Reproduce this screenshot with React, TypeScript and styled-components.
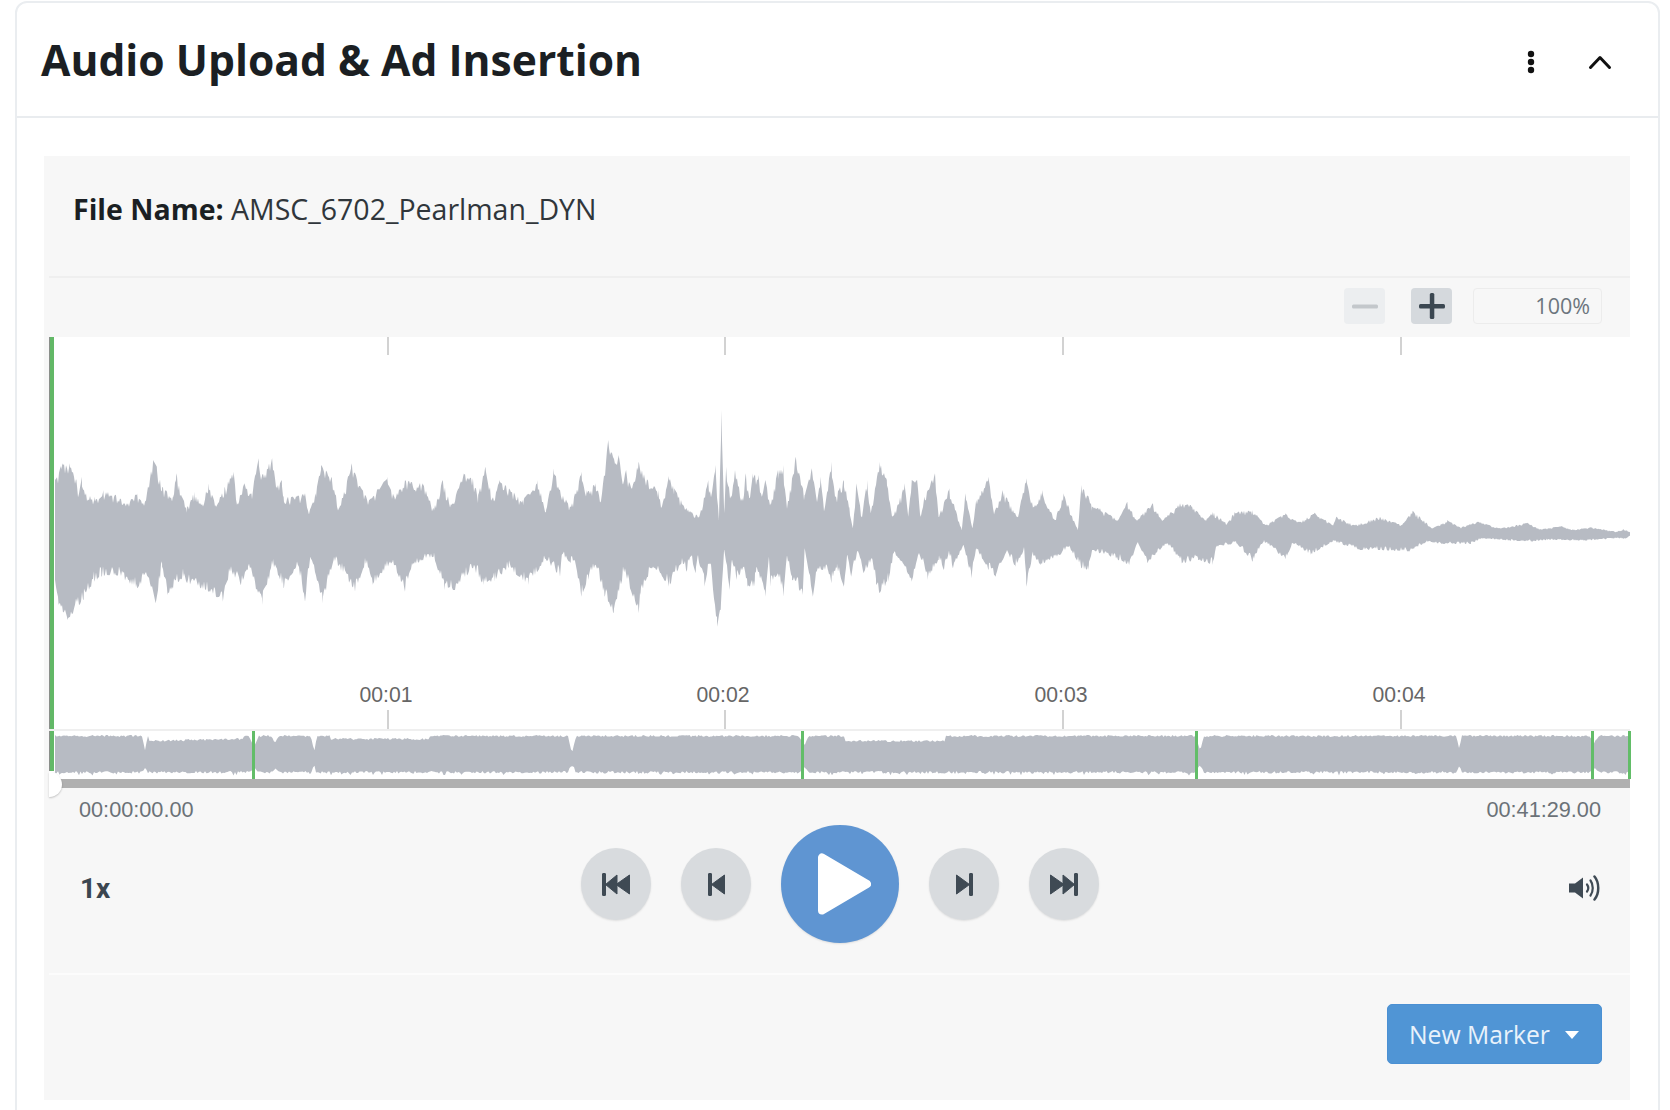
import React, { useMemo } from "react";
import styled, { createGlobalStyle } from "styled-components";

const GlobalStyle = createGlobalStyle`
  html, body { margin: 0; padding: 0; background: #fff; }
  body { font-family: "Open Sans", "Noto Sans", sans-serif; }
  * { box-sizing: border-box; }
`;

const Page = styled.div`
  width: 1670px;
  height: 1110px;
  overflow: hidden;
  padding: 1px 10px 0 15px;
`;
const Card = styled.section`
  width: 1645px;
  min-height: 1130px;
  border: 2px solid #eaedf0;
  border-radius: 12px 12px 0 0;
  background: #fff;
`;
const CardHeader = styled.header`
  height: 115px;
  border-bottom: 2px solid #e9ecef;
  display: flex;
  align-items: center;
  justify-content: space-between;
  padding: 0 46px 0 24px;
`;
const Title = styled.h1`
  margin: 0;
  font-size: 42.6px;
  font-weight: 700;
  color: #1b1f23;
  line-height: 1.2;
`;
const HeaderActions = styled.div`
  display: flex;
  align-items: center;
  gap: 53px;
  padding-top: 4px;
`;
const Panel = styled.div`
  margin: 38px 0 0 27px;
  width: 1586px;
  background: #f7f7f7;
`;
const FileRow = styled.div`
  height: 120px;
  padding: 34px 0 0 29px;
  font-size: 28.5px;
  line-height: 38px;
  color: #30363b;
  strong { font-weight: 700; color: #1b1f23; }
`;
const Rule = styled.div<{ $color: string }>`
  height: 2px;
  margin-left: 5px;
  background: ${(p) => p.$color};
`;
const ZoomBar = styled.div`
  height: 59px;
  display: flex;
  align-items: center;
  justify-content: flex-end;
  padding: 0 28px 3px 0;
`;
const ZoomButton = styled.button<{ $off?: boolean }>`
  width: 41px;
  height: 36px;
  padding: 0;
  border: 0;
  border-radius: 4px;
  display: flex;
  align-items: center;
  justify-content: center;
  background: ${(p) => (p.$off ? "#eceef0" : "#d5d9dd")};
  margin-right: ${(p) => (p.$off ? "26px" : "21px")};
`;
const ZoomValue = styled.div`
  width: 129px;
  height: 36px;
  border: 1px solid #ececec;
  border-radius: 4px;
  padding-right: 11px;
  text-align: right;
  font-size: 21.5px;
  line-height: 34px;
  color: #6c757d;
`;
const Timeline = styled.div`
  position: relative;
  margin-left: 5px;
  background: #fff;
`;
const TickRow = styled.div<{ $h: number }>`
  position: relative;
  height: ${(p) => p.$h}px;
`;
const Tick = styled.i`
  position: absolute;
  top: 0;
  bottom: 0;
  width: 2px;
  background: #d2d2d2;
`;
const WaveSvg = styled.svg`
  display: block;
  width: 1581px;
  filter: blur(0.5px);
`;
const LabelRow = styled.div`
  position: relative;
  height: 30px;
`;
const TimeLabel = styled.span`
  position: absolute;
  top: 0;
  transform: translateX(-50%);
  font-family: "Liberation Sans", Arial, sans-serif;
  font-size: 21.2px;
  line-height: 30px;
  color: #666;
`;
const Overview = styled.div`
  position: relative;
  height: 50px;
  border-top: 2px solid #efefef;
`;
const Marker = styled.i`
  position: absolute;
  top: 0;
  bottom: 0;
  width: 3px;
  background: #62bd68;
`;
const Playhead = styled.i<{ $top: number; $h: number }>`
  position: absolute;
  left: 0;
  top: ${(p) => p.$top}px;
  height: ${(p) => p.$h}px;
  width: 5px;
  border-left: 1px solid #8b8f8b;
  background: #62b867;
`;
const Scrub = styled.div`
  position: relative;
  height: 9px;
  margin-left: 5px;
  background: #b0b0b0;
`;
const Knob = styled.i`
  position: absolute;
  left: 0;
  top: -7px;
  width: 13px;
  height: 25px;
  border-radius: 0 13px 13px 0;
  background: #fff;
  box-shadow: 0 1px 2px rgba(0, 0, 0, 0.22);
`;
const TimeRow = styled.div`
  height: 37px;
  padding: 7px 29px 0 35px;
  display: flex;
  justify-content: space-between;
  font-family: "Liberation Sans", Arial, sans-serif;
  font-size: 21.7px;
  line-height: 30px;
  color: #6b7278;
`;
const Controls = styled.div`
  height: 148px;
  padding: 0 29px 30px 35px;
  display: grid;
  grid-template-columns: 1fr auto 1fr;
  align-items: center;
`;
const Speed = styled.div`
  font-family: "Roboto", sans-serif;
  font-size: 28px;
  font-weight: 700;
  color: #3b4650;
  padding: 8px 0 0 1px;
`;
const Transport = styled.div`
  display: flex;
  align-items: center;
  gap: 30px;
`;
const RoundButton = styled.button<{ $primary?: boolean }>`
  width: ${(p) => (p.$primary ? 118 : 70)}px;
  height: ${(p) => (p.$primary ? 118 : 72)}px;
  padding: 0;
  border: 0;
  border-radius: 50%;
  display: flex;
  align-items: center;
  justify-content: center;
  background: ${(p) => (p.$primary ? "#5f95d2" : "#d8dbde")};
  box-shadow: 0 1px 2px rgba(0, 0, 0, 0.1);
`;
const PlayIcon = styled.svg`
  margin-left: 9px;
`;
const VolumeWrap = styled.div`
  justify-self: end;
  display: flex;
  padding-top: 7px;
`;
const Footer = styled.div`
  height: 125px;
  padding: 29px 28px 0 0;
  display: flex;
  justify-content: flex-end;
  align-items: flex-start;
`;
const MarkerButton = styled.button`
  width: 215px;
  height: 60px;
  padding: 0 0 0 21px;
  border: 1px solid #4b90d3;
  border-radius: 5px;
  background: #5095d5;
  color: #e9f2fb;
  font-family: "Open Sans", sans-serif;
  font-size: 24.7px;
  display: flex;
  align-items: center;
  gap: 15px;
`;
const Caret = styled.i`
  width: 0;
  height: 0;
  border-left: 7.5px solid transparent;
  border-right: 7.5px solid transparent;
  border-top: 8px solid #fff;
  margin-top: 2px;
`;

type P = [number, number];
const map = (a: P[], ox: number, sx: number, oy: number): P[] =>
  a.map(([x, y]) => [ox + x / sx, oy + y / 3]);

const top1: P[] = [[70,240],[90,190],[110,190],[130,240],[135,290],[145,230],[150,270],[180,290],[200,290],[205,270],[240,285],[270,310],[300,280],[320,315],[345,180],[355,200],[370,260],[400,290],[410,220],[425,290],[440,320],[460,275],[480,315],[500,250],[520,315],[545,260],[570,215],[580,310],[600,250],[620,280],[640,175],[650,225],[678,175],[690,260],[705,240],[710,290],[735,290],[770,280],[780,340],[800,280],[815,195],[845,230],[865,325],[900,190],[925,260],[950,300],[1000,230],[1020,290],[1050,240],[1100,250],[1130,325],[1155,240],[1180,315],[1215,220],[1240,235],[1255,285],[1275,200],[1295,295],[1315,240],[1380,300],[1420,240],[1445,330],[1467,205]];
const bot1: P[] = [[70,540],[80,615],[105,660],[150,600],[180,545],[200,530],[240,525],[300,565],[330,530],[352,610],[370,500],[385,585],[430,530],[440,550],[500,575],[540,605],[560,515],[590,555],[610,510],[650,615],[680,495],[710,565],[750,495],[770,605],[785,470],[820,610],[850,480],[910,575],[940,490],[960,555],[1015,485],[1050,575],[1070,495],[1130,470],[1160,570],[1190,570],[1240,505],[1270,555],[1300,545],[1340,505],[1395,555],[1445,480]];
const top2: P[] = [[0,270],[30,320],[60,215],[75,270],[100,250],[115,300],[135,120],[155,190],[165,165],[175,250],[185,210],[200,265],[220,185],[245,240],[275,270],[285,320],[305,228],[320,265],[355,325],[390,350],[415,240],[425,280],[435,195],[445,360],[452,30],[460,340],[465,200],[480,290],[490,210],[510,295],[520,220],[530,295],[540,220],[555,225],[565,290],[575,240],[590,310],[610,210],[625,195],[635,320],[660,170],[685,285],[705,205],[720,305],[730,230],[740,330],[760,185],[770,290],[795,240],[810,320],[820,385],[830,250],[845,350],[860,240],[870,340],[895,185],[915,240],[930,350],[945,315],[965,250],[975,350],[985,240],[1000,240],[1010,350],[1020,290],[1050,220],[1060,350],[1090,265],[1125,390],[1135,280],[1155,385],[1165,300],[1180,275],[1200,230],[1215,340],[1240,270],[1280,350],[1305,235],[1325,320],[1350,270],[1385,360],[1410,280],[1450,390],[1460,255],[1480,290],[1490,320]];
const bot2: P[] = [[0,530],[5,465],[30,490],[40,480],[60,590],[80,540],[100,495],[125,590],[150,640],[180,515],[220,640],[225,585],[260,500],[305,560],[340,490],[355,515],[365,470],[380,520],[385,470],[405,560],[420,490],[440,680],[450,630],[460,450],[475,570],[480,490],[495,540],[515,500],[525,560],[545,560],[550,500],[575,590],[585,470],[590,560],[610,520],[625,590],[635,470],[650,540],[680,585],[685,445],[708,590],[720,510],[750,510],[760,550],[775,505],[795,560],[805,465],[815,530],[835,455],[850,520],[875,480],[885,555],[895,580],[920,545],[935,460],[960,490],[985,545],[1005,460],[1030,540],[1060,480],[1075,510],[1090,460],[1100,505],[1130,435],[1152,535],[1165,445],[1200,510],[1220,530],[1250,455],[1275,500],[1300,450],[1306,560],[1325,465],[1345,495],[1400,465],[1425,440],[1460,505],[1480,510],[1490,450]];
const top3: P[] = [[0,205],[50,240],[75,185],[100,240],[145,190],[170,240],[220,190],[250,195],[290,240],[310,215],[350,250],[370,215],[420,210],[455,255],[510,220],[550,245],[590,218],[640,255],[650,230],[700,255],[770,230],[830,255],[860,212],[915,265],[955,240],[990,262],[1040,245],[1100,265],[1175,248],[1210,268],[1270,258],[1300,268],[1350,262],[1420,275],[1440,268],[1458,275]];
const bot3: P[] = [[0,340],[30,350],[80,375],[105,310],[130,370],[185,310],[225,370],[270,360],[310,375],[320,320],[375,310],[420,365],[450,305],[510,358],[530,310],[580,345],[640,305],[715,330],[765,330],[850,335],[900,305],[940,312],[1020,312],[1050,295],[1130,302],[1190,305],[1230,300],[1330,302],[1430,295],[1440,298],[1458,290]];

const rng = (seed: number) => () => {
  seed = (seed * 16807) % 2147483647;
  return seed / 2147483647;
};

const interp = (pts: P[], x: number) => {
  for (let i = 1; i < pts.length; i++) {
    if (x <= pts[i][0]) {
      const [x0, y0] = pts[i - 1];
      const [x1, y1] = pts[i];
      return y0 + ((y1 - y0) * (x - x0)) / Math.max(x1 - x0, 0.01);
    }
  }
  return pts[pts.length - 1][1];
};

const edge = (pts: P[], x0: number, x1: number, seed: number, dir: 1 | -1) => {
  const r = rng(seed);
  const xs = new Set<number>();
  for (let x = x0; x <= x1; x += 1) xs.add(x);
  pts.forEach(([x]) => {
    if (x >= x0 && x <= x1) xs.add(x);
  });
  return [...xs]
    .sort((a, b) => a - b)
    .map((x) => {
      const y = interp(pts, x);
      const half = Math.abs(y - 533);
      const scale = Math.min(Math.max(half / 45, 0.12), 1);
      const isPeak = pts.some((p) => p[0] === x);
      const a = r();
      const hair = isPeak ? 0 : a * a * 11 * scale * dir;
      return `${x.toFixed(1)} ${(y + hair).toFixed(1)}`;
    });
};

const overviewNotches: Array<[number, number, number]> = [
  [145, 14, 3], [254, 10, 5], [275, 8, 3], [314, 16, 3], [572, 18, 4], [804, 10, 5],
  [1200, 14, 4], [1459, 12, 3], [1594, 8, 4],
];

const buildOverview = () => {
  const r = rng(4711);
  const up: string[] = [];
  const dn: string[] = [];
  for (let x = 55; x <= 1629; x += 1.5) {
    let t = 735 + r() * 2;
    let b = 771 + r() * 2.5 + (r() > 0.93 ? 2 : 0);
    if (x > 148 && x < 243) t += 3 + (243 - x) * 0.02;
    if (x > 844 && x < 946) t += 5;
    if (x > 330 && x < 430) t += 3;
    for (const [c, depth, w] of overviewNotches) {
      const d = Math.abs(x - c) / w;
      if (d < 1) {
        t += depth * (1 - d);
        b -= (depth / 2) * (1 - d);
      }
    }
    up.push(`${x} ${t.toFixed(1)}`);
    dn.unshift(`${x} ${b.toFixed(1)}`);
  }
  return `M${up.join("L")}L${dn.join("L")}Z`;
};

const ticks = [
  { x: 387, label: "00:01" },
  { x: 724, label: "00:02" },
  { x: 1062, label: "00:03" },
  { x: 1400, label: "00:04" },
];
const markers = [252, 801, 1195, 1591, 1628];
const ORIGIN = 49;

const ICON = "#3f4a54";
const RewindEnd = () => (
  <svg width="28" height="23" viewBox="0 0 28 23" fill={ICON} stroke={ICON} strokeWidth="1" strokeLinejoin="round">
    <rect x="0.500" y="0.500" width="3" height="22" rx="0.500" />
    <path d="M15 2v19L3.500 11.500zM27.500 2v19L14 11.500z" />
  </svg>
);
const StepBack = () => (
  <svg width="17" height="23" viewBox="0 0 17 23" fill={ICON} stroke={ICON} strokeWidth="1" strokeLinejoin="round">
    <rect x="0.500" y="0.500" width="3" height="22" rx="0.500" />
    <path d="M16.500 2v19L3.500 11.500z" />
  </svg>
);
const StepForward = () => (
  <svg width="17" height="23" viewBox="0 0 17 23" fill={ICON} stroke={ICON} strokeWidth="1" strokeLinejoin="round">
    <rect x="13.500" y="0.500" width="3" height="22" rx="0.500" />
    <path d="M0.500 2v19l13-9.500z" />
  </svg>
);
const ForwardEnd = () => (
  <svg width="28" height="23" viewBox="0 0 28 23" fill={ICON} stroke={ICON} strokeWidth="1" strokeLinejoin="round">
    <rect x="24.500" y="0.500" width="3" height="22" rx="0.500" />
    <path d="M0.500 2v19L14 11.500zM13 2v19l11.500-9.500z" />
  </svg>
);

export default function App() {
  const wavePath = useMemo(() => {
    const t = [...map(top1, 30, 2.8, 400), ...map(top2, 560, 2.8, 400), ...map(top3, 1100, 2.75, 440)];
    const b = [...map(bot1, 30, 2.8, 400), ...map(bot2, 560, 2.8, 400), ...map(bot3, 1100, 2.75, 440)];
    const up = edge(t, 55, 1630, 1234, 1);
    const dn = edge(b, 55, 1630, 9876, -1).reverse();
    return `M${up.join("L")}L${dn.join("L")}Z`;
  }, []);
  const overviewPath = useMemo(buildOverview, []);

  return (
    <Page>
      <GlobalStyle />
      <Card>
        <CardHeader>
          <Title>Audio Upload &amp; Ad Insertion</Title>
          <HeaderActions>
            <svg width="8" height="24" viewBox="0 0 8 24" fill="#111">
              <circle cx="4" cy="4" r="3.200" />
              <circle cx="4" cy="12" r="3.200" />
              <circle cx="4" cy="20" r="3.200" />
            </svg>
            <svg width="24" height="16" viewBox="0 0 24 16" fill="none" stroke="#111" strokeWidth="3" strokeLinecap="round" strokeLinejoin="round">
              <path d="M2.500 13.500L12 3.500l9.500 10" />
            </svg>
          </HeaderActions>
        </CardHeader>
        <Panel>
          <FileRow>
            <strong>File Name:</strong> AMSC_6702_Pearlman_DYN
          </FileRow>
          <Rule $color="#efefef" />
          <ZoomBar>
            <ZoomButton $off aria-label="Zoom out">
              <svg width="26" height="5" viewBox="0 0 26 5"><rect width="26" height="4" y="0.500" rx="1.500" fill="#c3c7cb" /></svg>
            </ZoomButton>
            <ZoomButton aria-label="Zoom in">
              <svg width="26" height="26" viewBox="0 0 26 26" fill="#3b4751">
                <rect x="0" y="11" width="26" height="4.500" rx="1.500" />
                <rect x="10.800" y="0" width="4.500" height="26" rx="1.500" />
              </svg>
            </ZoomButton>
            <ZoomValue>100%</ZoomValue>
          </ZoomBar>
          <Timeline>
            <TickRow $h={18}>
              {ticks.map((t) => (
                <Tick key={t.x} style={{ left: t.x - ORIGIN }} />
              ))}
            </TickRow>
            <WaveSvg height="325" viewBox="49 355 1581 325">
              <path d={wavePath} fill="#b7bbc3" />
            </WaveSvg>
            <LabelRow>
              {ticks.map((t) => (
                <TimeLabel key={t.x} style={{ left: t.x - ORIGIN - 1 }}>{t.label}</TimeLabel>
              ))}
            </LabelRow>
            <TickRow $h={19}>
              {ticks.map((t) => (
                <Tick key={t.x} style={{ left: t.x - ORIGIN }} />
              ))}
            </TickRow>
            <Overview>
              <WaveSvg height="48" viewBox="49 731 1581 48">
                <path d={overviewPath} fill="#b7bbc3" />
              </WaveSvg>
              {markers.map((m) => (
                <Marker key={m} style={{ left: m - ORIGIN }} />
              ))}
            </Overview>
            <Playhead $top={0} $h={392} />
            <Playhead $top={394} $h={40} />
          </Timeline>
          <Scrub>
            <Knob />
          </Scrub>
          <TimeRow>
            <span>00:00:00.00</span>
            <span>00:41:29.00</span>
          </TimeRow>
          <Controls>
            <Speed>1x</Speed>
            <Transport>
              <RoundButton aria-label="Go to start"><RewindEnd /></RoundButton>
              <RoundButton aria-label="Previous"><StepBack /></RoundButton>
              <RoundButton $primary aria-label="Play">
                <PlayIcon width="53" height="62" viewBox="0 0 53 62" fill="#fff" stroke="#fff" strokeWidth="8" strokeLinejoin="round">
                  <path d="M4 4.500v53L49 31z" />
                </PlayIcon>
              </RoundButton>
              <RoundButton aria-label="Next"><StepForward /></RoundButton>
              <RoundButton aria-label="Go to end"><ForwardEnd /></RoundButton>
            </Transport>
            <VolumeWrap>
              <svg width="32" height="26" viewBox="0 0 32 26" fill="none" stroke="#3f4a54" strokeLinecap="round">
                <path d="M0 8.500h6L14 2.500v21l-8-6H0z" fill="#3f4a54" stroke="none" />
                <path d="M18 9.500c1.500 2 1.500 5 0 7" strokeWidth="2.200" />
                <path d="M21.500 5.500c3 4 3 11 0 15" strokeWidth="2.200" />
                <path d="M25.500 1.500c5 6 5 17 0 23" strokeWidth="2.500" />
              </svg>
            </VolumeWrap>
          </Controls>
          <Rule $color="#fcfcfc" />
          <Footer>
            <MarkerButton>
              New Marker
              <Caret />
            </MarkerButton>
          </Footer>
        </Panel>
      </Card>
    </Page>
  );
}
